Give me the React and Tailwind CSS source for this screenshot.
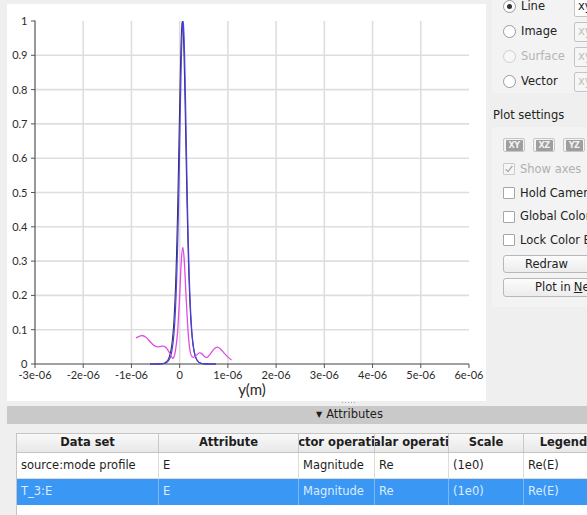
import React from "react";

const X0 = 35;
const PX = 48.222;
const Y0 = 364;
const PY = 343;
const xp = (v) => X0 + (v + 3) * PX;
const yp = (v) => Y0 - v * PY;

function spline(pts) {
  let d = `M${pts[0][0].toFixed(2)},${pts[0][1].toFixed(2)}`;
  for (let i = 0; i < pts.length - 1; i++) {
    const p0 = pts[i - 1] || pts[i];
    const p1 = pts[i];
    const p2 = pts[i + 1];
    const p3 = pts[i + 2] || p2;
    const c1x = p1[0] + (p2[0] - p0[0]) / 6;
    const c1y = p1[1] + (p2[1] - p0[1]) / 6;
    const c2x = p2[0] - (p3[0] - p1[0]) / 6;
    const c2y = p2[1] - (p3[1] - p1[1]) / 6;
    d += ` C${c1x.toFixed(2)},${c1y.toFixed(2)} ${c2x.toFixed(2)},${c2y.toFixed(2)} ${p2[0].toFixed(2)},${p2[1].toFixed(2)}`;
  }
  return d;
}

function sechCurve(c, w, from, to) {
  const pts = [];
  for (let x = from; x <= to; x += 0.5) {
    const s = 1 / Math.cosh((x - c) / w);
    pts.push(`${x.toFixed(2)},${yp(s * s).toFixed(2)}`);
  }
  return "M" + pts.join(" L");
}

const magentaKnots = [
  [136, 0.076], [141.5, 0.083], [146, 0.078], [151, 0.062], [155, 0.052], [159, 0.05],
  [163, 0.052], [166, 0.048], [169, 0.035], [171.5, 0.021], [173.5, 0.018], [175.5, 0.04],
  [177.5, 0.09], [179.5, 0.19], [181.3, 0.3], [182.8, 0.34], [184.3, 0.3], [186.2, 0.19],
  [188.2, 0.09], [190.2, 0.035], [192.5, 0.02], [195, 0.022], [199, 0.032], [201.5, 0.031],
  [204.5, 0.022], [207, 0.019], [210, 0.028], [213.5, 0.042], [217, 0.049], [220, 0.045],
  [224, 0.032], [228, 0.02], [231.5, 0.012],
].map(([x, v]) => [x, yp(v)]);

function Plot() {
  const vGrid = [-2, -1, 0, 1, 2, 3, 4, 5];
  const hGrid = [0.1, 0.2, 0.3, 0.4, 0.5, 0.6, 0.7, 0.8, 0.9];
  const yLabels = ["0", "0.1", "0.2", "0.3", "0.4", "0.5", "0.6", "0.7", "0.8", "0.9", "1"];
  const xLabels = ["-3e-06", "-2e-06", "-1e-06", "0", "1e-06", "2e-06", "3e-06", "4e-06", "5e-06", "6e-06"];
  return (
    <svg width="479" height="397" viewBox="7 4 479 397" className="block">
      {vGrid.map((v) => (
        <line key={"v" + v} x1={xp(v)} x2={xp(v)} y1={21} y2={Y0} stroke="#dedede" strokeWidth="1.6" />
      ))}
      {hGrid.map((v) => (
        <line key={"h" + v} x1={X0} x2={xp(6)} y1={yp(v)} y2={yp(v)} stroke="#dedede" strokeWidth="1.6" />
      ))}
      <line x1={X0} x2={X0} y1={20.5} y2={Y0} stroke="#555" strokeWidth="1.2" />
      <line x1={X0} x2={xp(6)} y1={Y0} y2={Y0} stroke="#444" strokeWidth="1.2" />
      {yLabels.map((t, i) => (
        <g key={"yl" + t}>
          <line x1={31} x2={X0} y1={yp(i / 10)} y2={yp(i / 10)} stroke="#555" strokeWidth="1" />
          <text x={27.5} y={yp(i / 10) + 4} textAnchor="end" fontFamily="Lato, sans-serif" fontSize="11" fill="#2b2b2b">
            {t}
          </text>
        </g>
      ))}
      {xLabels.map((t, i) => (
        <g key={"xl" + t}>
          <line x1={xp(i - 3)} x2={xp(i - 3)} y1={Y0} y2={Y0 + 4} stroke="#555" strokeWidth="1" />
          <text x={xp(i - 3)} y={378.5} textAnchor="middle" fontFamily="Lato, sans-serif" fontSize="11" fill="#2b2b2b">
            {t}
          </text>
        </g>
      ))}
      <text x={252} y={394.5} textAnchor="middle" fontFamily="Lato, sans-serif" fontSize="15" fill="#2b2b2b">
        y(m)
      </text>
      <path d={sechCurve(182.4, 5.0, 150, 216)} fill="none" stroke="#333" strokeWidth="1.1" />
      <path d={sechCurve(183.0, 4.8, 150, 216)} fill="none" stroke="#4a3cf0" strokeWidth="1.2" />
      <path d={spline(magentaKnots)} fill="none" stroke="#e04ee0" strokeWidth="1.3" />
    </svg>
  );
}

function Radio({ checked, disabled }) {
  return (
    <span
      className={
        "w-[13px] h-[13px] rounded-full border flex items-center justify-center shrink-0 " +
        (disabled ? "border-[#cfcfcf] bg-[#f7f7f7]" : "border-[#9a9a9a] bg-white")
      }
    >
      {checked && <span className="w-[5px] h-[5px] rounded-full bg-[#333]" />}
    </span>
  );
}

function RadioRow({ label, checked, disabled, boxEnabled }) {
  return (
    <div className="h-[25px] flex items-center pl-[11px]">
      <div className="w-[71px] flex items-center gap-[5px] shrink-0">
        <Radio checked={checked} disabled={disabled} />
        <span className={disabled ? "text-[#b5b5b5]" : "text-[#222]"}>{label}</span>
      </div>
      <div
        className={
          "w-[40px] h-[20px] shrink-0 border border-[#c4c4c4] rounded-[2px] flex items-center pl-[3px] " +
          (boxEnabled ? "bg-white text-[#222]" : "bg-[#f6f6f6] text-[#c0c0c0]")
        }
      >
        xy
      </div>
    </div>
  );
}

function Check({ checked, disabled }) {
  return (
    <span
      className={
        "w-[12px] h-[12px] border rounded-[1px] flex items-center justify-center shrink-0 " +
        (disabled ? "border-[#cacaca] bg-[#f5f5f5]" : "border-[#a6a6a6] bg-white")
      }
    >
      {checked && (
        <svg width="10" height="10" viewBox="0 0 10 10">
          <path d="M1.8 5.2 L4 7.6 L8.4 1.8" fill="none" stroke={disabled ? "#a8a8a8" : "#333"} strokeWidth="1.3" />
        </svg>
      )}
    </span>
  );
}

function CheckRow({ label, checked, disabled, h }) {
  return (
    <div className={"flex items-center gap-[5px] " + h}>
      <Check checked={checked} disabled={disabled} />
      <span className={"whitespace-nowrap " + (disabled ? "text-[#b0b0b0]" : "text-[#222]")}>{label}</span>
    </div>
  );
}

function PlaneBtn({ t }) {
  return (
    <div className="w-[22px] h-[14px] shrink-0 border border-[#c6c6c6] rounded-[2px] bg-[#f4f4f4] flex items-center justify-center">
      <span className="w-[17px] h-[11px] bg-[#9e9e9e] rounded-[1px] text-[#f2f2f2] text-[9px] leading-[11px] font-bold tracking-[-0.6px] flex items-center justify-center font-['DejaVu_Sans_Condensed','DejaVu_Sans',sans-serif]">
        {t}
      </span>
    </div>
  );
}

function RightPanel() {
  return (
    <div className="w-[101px] h-full overflow-hidden flex flex-col text-[11.5px] leading-[13px] text-[#222]">
      <div className="ml-[6px] bg-[#f3f3f3] h-[93px] overflow-hidden shrink-0">
        <div className="mt-[-6px]">
          <RadioRow label="Line" checked boxEnabled />
          <RadioRow label="Image" />
          <RadioRow label="Surface" disabled />
          <RadioRow label="Vector" />
        </div>
      </div>
      <div className="h-[34px] pt-[16px] pl-[7px] shrink-0 whitespace-nowrap">Plot settings</div>
      <div className="ml-[6px] bg-[#f3f3f3] h-[180px] pl-[11px] pt-[11px] shrink-0 flex flex-col">
        <div className="flex gap-[8px] h-[14px]">
          <PlaneBtn t="XY" />
          <PlaneBtn t="XZ" />
          <PlaneBtn t="YZ" />
        </div>
        <div className="mt-[5px]">
          <CheckRow label="Show axes" checked disabled h="h-[24px]" />
          <CheckRow label="Hold Camera" h="h-[24px]" />
          <CheckRow label="Global Color" h="h-[23px]" />
          <CheckRow label="Lock Color Bar" h="h-[24px]" />
        </div>
        <div className="mt-[3px] w-[130px] h-[18px] border border-[#b8b8b8] rounded-[3px] bg-gradient-to-b from-[#fcfcfc] to-[#ececec] flex items-center pl-[21px] shrink-0">
          Redraw
        </div>
        <div className="mt-[5px] w-[130px] h-[19px] border border-[#b8b8b8] rounded-[3px] bg-gradient-to-b from-[#fcfcfc] to-[#ececec] flex items-center pl-[31px] shrink-0 whitespace-nowrap">
          Plot in <span className="underline ml-[3px]">N</span>ew Window
        </div>
      </div>
    </div>
  );
}

const cols = [
  { w: "w-[142px]", h: "Data set" },
  { w: "w-[140px]", h: "Attribute" },
  { w: "w-[76px]", h: "Vector operation" },
  { w: "w-[74px]", h: "Scalar operation" },
  { w: "w-[75px]", h: "Scale" },
  { w: "w-[80px]", h: "Legend" },
];

const rows = [
  ["source:mode profile", "E", "Magnitude", "Re", "(1e0)", "Re(E)"],
  ["T_3:E", "E", "Magnitude", "Re", "(1e0)", "Re(E)"],
];

function Table() {
  return (
    <div className="ml-[9px] flex-1 bg-white border-l border-t border-[#c4c4c4] overflow-hidden text-[11.5px]">
      <div className="flex h-[19px] bg-gradient-to-b from-[#f9f9f9] to-[#e8e8e8] border-b border-[#c4c4c4]">
        {cols.map((c) => (
          <div
            key={c.h}
            className={c.w + " shrink-0 h-full border-r border-[#c8c8c8] overflow-hidden flex items-center justify-center font-bold text-[#1e1e1e]"}
          >
            <span className="whitespace-nowrap shrink-0">{c.h}</span>
          </div>
        ))}
      </div>
      {rows.map((r, ri) => {
        const sel = ri === 1;
        return (
          <div
            key={ri}
            className={
              "flex h-[26px] " + (sel ? "bg-[#3a97f4] text-[#dcecff]" : "bg-white text-[#1e1e1e] border-b border-[#dcdcdc]")
            }
          >
            {r.map((t, ci) => (
              <div
                key={ci}
                className={
                  cols[ci].w +
                  " shrink-0 h-full flex items-center pl-[4px] whitespace-nowrap overflow-hidden border-r " +
                  (sel ? "border-[#7ab8f7]" : "border-[#dcdcdc]")
                }
              >
                {t}
              </div>
            ))}
          </div>
        );
      })}
    </div>
  );
}

export default function App() {
  return (
    <div className="w-[587px] h-[515px] bg-[#efefef] overflow-hidden flex flex-col font-['DejaVu_Sans',sans-serif]">
      <div className="flex h-[402px] shrink-0">
        <div className="w-[7px] shrink-0" />
        <div className="w-[479px] h-[397px] mt-[4px] bg-white shrink-0">
          <Plot />
        </div>
        <RightPanel />
      </div>
      <div className="h-[4px] shrink-0 flex items-start pl-[342px]">
        <div className="flex gap-[2px]">
          <span className="w-[1px] h-[1px] bg-[#aaa]" />
          <span className="w-[1px] h-[1px] bg-[#aaa]" />
          <span className="w-[1px] h-[1px] bg-[#aaa]" />
          <span className="w-[1px] h-[1px] bg-[#aaa]" />
          <span className="w-[1px] h-[1px] bg-[#aaa]" />
        </div>
      </div>
      <div className="ml-[7px] h-[18px] shrink-0 bg-[#c9c9c9] flex items-center pl-[309px] text-[11.5px] text-[#1e1e1e]">
        <span className="text-[8px] mr-[4px]">▼</span>
        <span>Attributes</span>
      </div>
      <div className="h-[9px] shrink-0" />
      <div className="flex-1 flex flex-col pl-[7px]">
        <Table />
      </div>
    </div>
  );
}
